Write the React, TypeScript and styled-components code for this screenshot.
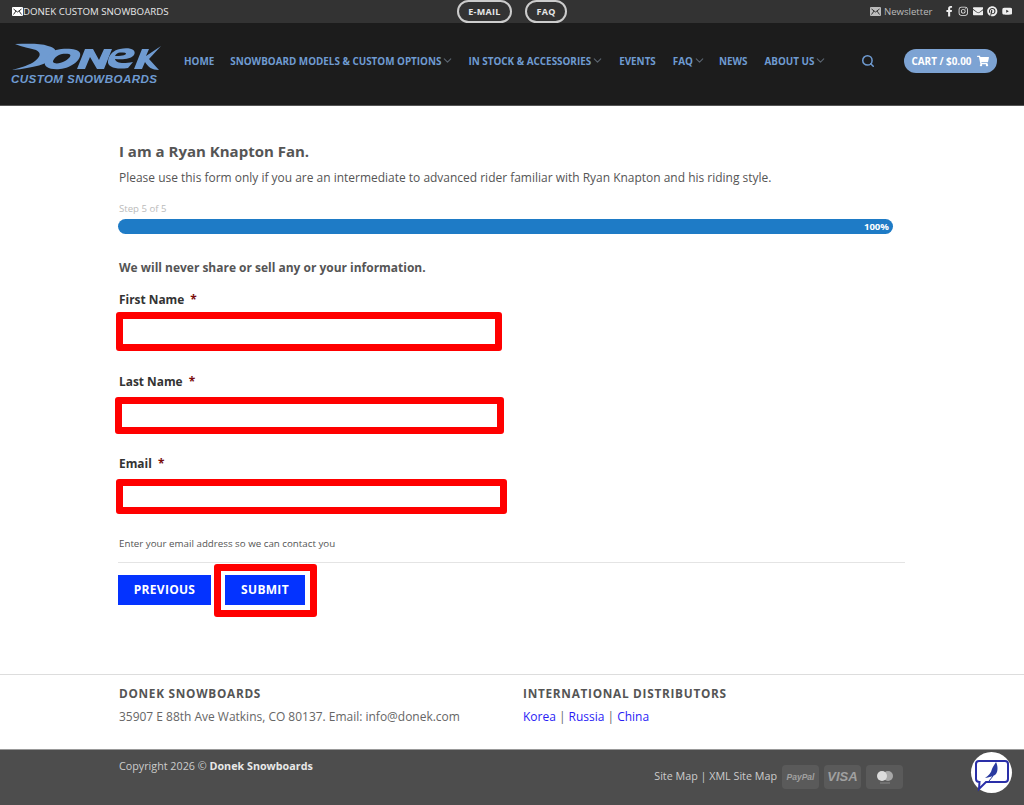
import React from 'react';
import styled, { createGlobalStyle } from 'styled-components';
import { FaFacebookF, FaInstagram, FaEnvelope, FaPinterest, FaYoutube, FaShoppingCart } from 'react-icons/fa';
import { FiChevronDown, FiSearch } from 'react-icons/fi';

const GlobalStyle = createGlobalStyle`
  html, body {
    margin: 0;
    padding: 0;
    background: #fff;
    font-family: "Open Sans", "Noto Sans", sans-serif;
    color: #555;
    overflow: hidden;
  }
  * { box-sizing: border-box; }
`;

const Page = styled.div`
  position: relative;
  width: 1024px;
  height: 805px;
  display: flex;
  flex-direction: column;
`;

/* top bar */
const TopBar = styled.div`
  height: 23px;
  flex: none;
  background: #333;
  display: grid;
  grid-template-columns: 1fr auto 1fr;
  align-items: center;
  padding: 0 12px;
`;
const Brand = styled.div`
  display: flex;
  align-items: center;
  color: #e8e8e8;
  font-size: 9.7px;
  line-height: 23px;
`;
const Pills = styled.div`
  display: flex;
  gap: 13px;
  height: 23px;
`;
const Pill = styled.a<{ $w: number }>`
  width: ${(p) => p.$w}px;
  height: 23px;
  border: 2px solid #ccc;
  border-radius: 12px;
  color: #e6e6e6;
  font-size: 9px;
  font-weight: 700;
  letter-spacing: 0.3px;
  display: flex;
  align-items: center;
  justify-content: center;
`;
const TopRight = styled.div`
  display: flex;
  align-items: center;
  justify-content: flex-end;
  color: #bbb;
  font-size: 9.6px;
`;
const Newsletter = styled.span`
  display: flex;
  align-items: center;
  gap: 3px;
  margin-right: 11px;
`;
const Socials = styled.div`
  display: flex;
  align-items: center;
  gap: 4px;
  color: #eee;
  font-size: 10.5px;
`;

/* header */
const Header = styled.header`
  height: 83px;
  flex: none;
  background: #1c1c1c;
  border-bottom: 1px solid #555;
  display: flex;
  align-items: center;
  padding: 0 27px 7px 12px;
`;
const Logo = styled.div`
  width: 150px;
  flex: none;
  margin-top: 6px;
  display: flex;
  flex-direction: column;
  margin-right: 22px;
`;
const LogoTag = styled.span`
  font-family: "Liberation Sans", Arial, sans-serif;
  font-style: italic;
  font-weight: 700;
  font-size: 11.6px;
  line-height: 13px;
  letter-spacing: 0.4px;
  color: #6f9bd1;
  white-space: nowrap;
  margin-left: -1px;
`;
const Nav = styled.nav`
  display: flex;
  align-items: center;
  flex: 1;
`;
const NavItem = styled.a<{ $gap: number }>`
  display: flex;
  align-items: center;
  color: #6f9bd1;
  font-size: 9.9px;
  font-weight: 700;
  white-space: nowrap;
  margin-right: ${(p) => p.$gap}px;
  svg {
    color: #5a6470;
  }
`;
const SearchIcon = styled(FiSearch)`
  color: #6f9bd1;
  font-size: 14px;
  stroke-width: 2.6;
  margin-right: 29px;
`;
const Cart = styled.a`
  width: 93px;
  height: 24px;
  border-radius: 12px;
  background: #7da3d3;
  color: #fff;
  font-size: 9.9px;
  font-weight: 700;
  display: flex;
  align-items: center;
  justify-content: center;
  gap: 6px;
  flex: none;
`;

/* form */
const Main = styled.main`
  flex: 1;
  width: 787px;
  margin-left: 118px;
  padding-top: 35px;
`;
const Title = styled.h2`
  margin: 0;
  padding-left: 1px;
  font-size: 15px;
  line-height: 20px;
  font-weight: 700;
  color: #555;
`;
const Intro = styled.p`
  margin: 8px 0 0;
  padding-left: 1px;
  font-size: 11.98px;
  line-height: 18px;
  color: #555;
`;
const StepLabel = styled.div`
  margin-top: 15px;
  padding-left: 1px;
  font-size: 9.6px;
  line-height: 14px;
  color: #bbb;
`;
const Progress = styled.div`
  margin-top: 3px;
  width: 775px;
  height: 15px;
  border-radius: 8px;
  background: #1e7bc6;
  color: #fff;
  font-size: 9.6px;
  font-weight: 700;
  line-height: 15px;
  text-align: right;
  padding-right: 4px;
`;
const Notice = styled.p`
  margin: 25px 0 0;
  padding-left: 1px;
  font-size: 11.97px;
  line-height: 18px;
  font-weight: 700;
  color: #555;
`;
const FieldLabel = styled.label<{ $top: number }>`
  display: block;
  margin-top: ${(p) => p.$top}px;
  padding-left: 1px;
  font-size: 11.9px;
  line-height: 18px;
  font-weight: 700;
  color: #333;
`;
const Required = styled.span`
  color: #7a0c0c;
  margin-left: 3px;
`;
const Input = styled.div<{ $w: number; $h: number; $left: number; $top: number }>`
  width: ${(p) => p.$w}px;
  height: ${(p) => p.$h}px;
  margin-left: ${(p) => p.$left}px;
  margin-top: ${(p) => p.$top}px;
  border: 7px solid #f00;
  border-radius: 3px;
  background: #fff;
`;
const Hint = styled.div`
  margin-top: 23px;
  padding-left: 1px;
  font-size: 9.75px;
  line-height: 14px;
  color: #555;
`;
const Rule = styled.hr`
  margin: 11px 0 0;
  border: 0;
  border-top: 1px solid #e4e4e4;
`;
const Actions = styled.div`
  display: flex;
  align-items: flex-start;
  margin-top: 1px;
`;
const Button = styled.a`
  background: #0433ff;
  color: #fff;
  font-size: 12px;
  font-weight: 700;
  letter-spacing: 0.3px;
  height: 30px;
  padding-bottom: 1px;
  display: flex;
  align-items: center;
  justify-content: center;
`;
const PrevButton = styled(Button)`
  width: 93px;
  margin-top: 11px;
`;
const SubmitFrame = styled.div`
  margin-left: 3px;
  width: 103px;
  height: 53px;
  border: 7px solid #f00;
  border-radius: 3px;
  padding: 4px;
  display: flex;
  ${Button} {
    width: 80px;
  }
`;

/* footers */
const FooterTop = styled.footer`
  flex: none;
  height: 75px;
  border-top: 1px solid #ddd;
  padding: 9px 0 0 119px;
  display: grid;
  grid-template-columns: 404px 1fr;
`;
const FooterHeading = styled.h4`
  margin: 0;
  font-size: 11.8px;
  line-height: 18px;
  font-weight: 700;
  letter-spacing: 0.72px;
  color: #555;
`;
const FooterText = styled.p`
  margin: 6px 0 0;
  font-size: 11.97px;
  line-height: 18px;
  color: #666;
  a { color: #2a1cf5; }
`;
const FooterBottom = styled.div`
  flex: none;
  height: 56px;
  background: #4d4d4d;
  border-top: 1px solid #999;
  padding: 0 121px 0 119px;
  display: flex;
  justify-content: space-between;
  color: #ccc;
  font-size: 10.75px;
`;
const Copyright = styled.div`
  margin-top: 8px;
  line-height: 16px;
  b { color: #e8e8e8; }
`;
const FooterLinks = styled.div`
  display: flex;
  align-items: flex-start;
  margin-top: 15px;
  gap: 5px;
  line-height: 22px;
`;
const PayBadge = styled.span`
  width: 37px;
  height: 24px;
  border-radius: 4px;
  background: rgba(255, 255, 255, 0.08);
  color: #a0a0a0;
  display: flex;
  align-items: center;
  justify-content: center;
  font-family: "Liberation Sans", Arial, sans-serif;
  font-style: italic;
  font-weight: 700;
`;
const PayText = styled.span<{ $size: number }>`
  font-size: ${(p) => p.$size}px;
`;
const ChatBubble = styled.div`
  position: absolute;
  left: 971px;
  top: 752px;
  width: 41px;
  height: 41px;
  border-radius: 50%;
  background: #fff;
  display: flex;
  align-items: center;
  justify-content: center;
`;

const DonekMark = () => (
  <svg width="150" height="29" viewBox="0 0 150 29" fill="#6f9bd1">
    <path d="M3 1 C14 1 28 0 36 3 C44 5 46 9 42 14 C36 21 22 25 0 27 C10 24 18 22 23 18 C28 14 30 10 24 7 C18 5 10 4 3 1 Z" />
    <path fillRule="evenodd" d="M44 7 C52 5 66 5 68 10 C70 16 60 25 48 26 C38 27 31 24 33 18 C35 13 39 9 44 7 Z M50 11 C45 12 41 16 41 19 C42 21 48 21 53 18 C58 15 60 12 57 11 C55 10.5 52 10.5 50 11 Z" />
    <path d="M65 26 L73 6 L81 6 L87 17 L92 6 L100 6 L92 26 L85 26 L78 14 L73 26 Z" />
    <path fillRule="evenodd" d="M108 6 C118 4 125 7 122 12 C119 16 111 17 103 16 C104 20 110 21 121 19 L116 25 C104 27 95 24 96 18 C97 11 102 7 108 6 Z M108 9.5 C106 9.5 104 11 103 13 C108 13 114 12.5 114 10.5 C114 9.5 111 9.5 108 9.5 Z" />
    <path d="M122 26 L130 6 L137 6 L134 13 L149 3 L137 16 L147 27 C140 27 136 24 133 19 L130 26 Z" />
  </svg>
);

const LetterIcon = ({ fill }: { fill: string }) => (
  <svg width="11" height="9" viewBox="0 0 11 9">
    <rect width="11" height="9" rx="1" fill={fill} />
    <path d="M1.5 2 L5.5 5 L9.5 2 M1.5 7.5 L4 4 M9.5 7.5 L7 4" stroke="#333" strokeWidth="1" fill="none" />
  </svg>
);

const ChatIcon = () => (
  <svg width="38" height="38" viewBox="0 0 38 38">
    <path d="M6 7 H32 Q35 7 35 10 V25 Q35 28 32 28 H13 L6 35 L6.5 28 Q3 28 3 25 V10 Q3 7 6 7 Z" fill="#fff" stroke="#2a2fa8" strokeWidth="2" />
    <path d="M12 24 C16 21 18 19 19 15 C20 12 22 10 23 8 C25 12 25 17 23 20 C20 23 16 23 12 24 Z" fill="#2a3aa0" />
    <path d="M16 27 L20 22" stroke="#2a3aa0" strokeWidth="1" />
  </svg>
);

const MasterIcon = () => (
  <svg width="20" height="14" viewBox="0 0 20 14">
    <circle cx="13" cy="6" r="5" fill="#a8a8a8" />
    <circle cx="7" cy="6" r="5" fill="#dcdcdc" />
    <rect x="5" y="12.5" width="10" height="1" fill="#888" />
  </svg>
);

const navItems = [
  { label: 'HOME', gap: 16 },
  { label: 'SNOWBOARD MODELS & CUSTOM OPTIONS', gap: 14, menu: true },
  { label: 'IN STOCK & ACCESSORIES', gap: 15, menu: true },
  { label: 'EVENTS', gap: 17 },
  { label: 'FAQ', gap: 13, menu: true },
  { label: 'NEWS', gap: 17 },
  { label: 'ABOUT US', gap: 0, menu: true },
];

const App = () => {
  return (
    <Page>
      <GlobalStyle />
      <TopBar>
        <Brand>
          <LetterIcon fill="#fff" />
          DONEK CUSTOM SNOWBOARDS
        </Brand>
        <Pills>
          <Pill $w={55}>E-MAIL</Pill>
          <Pill $w={42}>FAQ</Pill>
        </Pills>
        <TopRight>
          <Newsletter>
            <LetterIcon fill="#bbb" />
            Newsletter
          </Newsletter>
          <Socials>
            <FaFacebookF />
            <FaInstagram />
            <FaEnvelope />
            <FaPinterest />
            <FaYoutube />
          </Socials>
        </TopRight>
      </TopBar>

      <Header>
        <Logo>
          <DonekMark />
          <LogoTag>CUSTOM SNOWBOARDS</LogoTag>
        </Logo>
        <Nav>
          {navItems.map((item) => (
            <NavItem key={item.label} $gap={item.gap}>
              {item.label}
              {item.menu && <FiChevronDown size={13} />}
            </NavItem>
          ))}
        </Nav>
        <SearchIcon />
        <Cart>
          CART / $0.00
          <FaShoppingCart size={12} />
        </Cart>
      </Header>

      <Main>
        <Title>I am a Ryan Knapton Fan.</Title>
        <Intro>Please use this form only if you are an intermediate to advanced rider familiar with Ryan Knapton and his riding style.</Intro>
        <StepLabel>Step 5 of 5</StepLabel>
        <Progress>100%</Progress>
        <Notice>We will never share or sell any or your information.</Notice>
        <FieldLabel $top={13}>
          First Name <Required>*</Required>
        </FieldLabel>
        <Input $w={386} $h={39} $left={-2} $top={4} />
        <FieldLabel $top={21}>
          Last Name <Required>*</Required>
        </FieldLabel>
        <Input $w={389} $h={37} $left={-3} $top={7} />
        <FieldLabel $top={20}>
          Email <Required>*</Required>
        </FieldLabel>
        <Input $w={391} $h={35} $left={-2} $top={7} />
        <Hint>Enter your email address so we can contact you</Hint>
        <Rule />
        <Actions>
          <PrevButton>PREVIOUS</PrevButton>
          <SubmitFrame>
            <Button>SUBMIT</Button>
          </SubmitFrame>
        </Actions>
      </Main>

      <FooterTop>
        <div>
          <FooterHeading>DONEK SNOWBOARDS</FooterHeading>
          <FooterText>35907 E 88th Ave Watkins, CO 80137. Email: info@donek.com</FooterText>
        </div>
        <div>
          <FooterHeading>INTERNATIONAL DISTRIBUTORS</FooterHeading>
          <FooterText>
            <a>Korea</a> | <a>Russia</a> | <a>China</a>
          </FooterText>
        </div>
      </FooterTop>
      <FooterBottom>
        <Copyright>
          Copyright 2026 © <b>Donek Snowboards</b>
        </Copyright>
        <FooterLinks>
          <span>Site Map | XML Site Map</span>
          <PayBadge>
            <PayText $size={8.5}>PayPal</PayText>
          </PayBadge>
          <PayBadge>
            <PayText $size={13}>VISA</PayText>
          </PayBadge>
          <PayBadge>
            <MasterIcon />
          </PayBadge>
        </FooterLinks>
      </FooterBottom>
      <ChatBubble>
        <ChatIcon />
      </ChatBubble>
    </Page>
  );
};

export default App;
